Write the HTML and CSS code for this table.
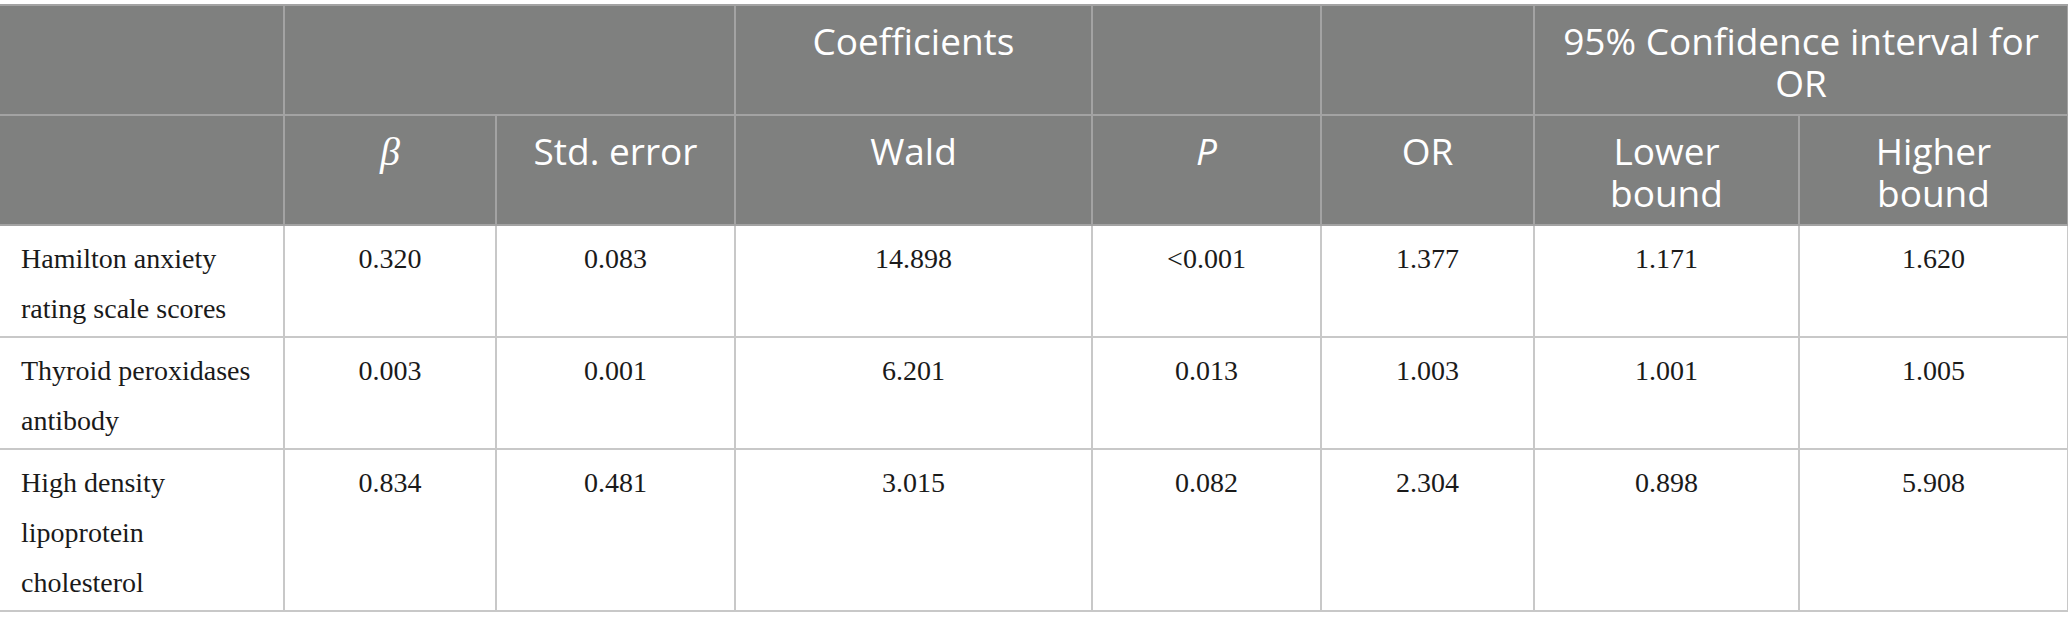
FILE: index.html
```html
<!DOCTYPE html>
<html lang="en">
<head>
<meta charset="utf-8">
<title>Logistic regression table</title>
<link rel="stylesheet" href="styles.css">
</head>
<body>
<table class="data-table">
  <colgroup>
    <col class="c0"><col class="c1"><col class="c2"><col class="c3"><col class="c4"><col class="c5"><col class="c6"><col class="c7">
  </colgroup>
  <thead>
    <tr>
      <th></th>
      <th colspan="2"></th>
      <th>Coefficients</th>
      <th></th>
      <th></th>
      <th colspan="2">95% Confidence interval for<br>OR</th>
    </tr>
    <tr>
      <th></th>
      <th><span class="beta">β</span></th>
      <th>Std. error</th>
      <th>Wald</th>
      <th><span class="ital">P</span></th>
      <th>OR</th>
      <th>Lower<br>bound</th>
      <th>Higher<br>bound</th>
    </tr>
  </thead>
  <tbody>
    <tr>
      <td class="label">Hamilton anxiety rating scale scores</td>
      <td>0.320</td><td>0.083</td><td>14.898</td><td>&lt;0.001</td><td>1.377</td><td>1.171</td><td>1.620</td>
    </tr>
    <tr>
      <td class="label">Thyroid peroxidases antibody</td>
      <td>0.003</td><td>0.001</td><td>6.201</td><td>0.013</td><td>1.003</td><td>1.001</td><td>1.005</td>
    </tr>
    <tr>
      <td class="label">High density lipoprotein cholesterol</td>
      <td>0.834</td><td>0.481</td><td>3.015</td><td>0.082</td><td>2.304</td><td>0.898</td><td>5.908</td>
    </tr>
  </tbody>
</table>
</body>
</html>
```

FILE: styles.css
```css
html, body {
  margin: 0;
  padding: 0;
  background: #ffffff;
}

body {
  padding-top: 4px;
}

.data-table {
  width: 2068px;
  table-layout: fixed;
  border-collapse: collapse;
  border: 2px solid #c4c4c4;
  border-left: none;
}

.c0 { width: 284px; }
.c1 { width: 212px; }
.c2 { width: 239px; }
.c3 { width: 357px; }
.c4 { width: 229px; }
.c5 { width: 213px; }
.c6 { width: 265px; }
.c7 { width: 269px; }

.data-table th {
  background: #7f807f;
  color: #ffffff;
  font-family: "Open Sans", "Noto Sans", sans-serif;
  font-weight: 400;
  font-size: 37px;
  line-height: 42px;
  text-align: center;
  vertical-align: top;
  padding: 14px 8px 10px;
  border: 2px solid #a3a3a3;
}

.data-table th:first-child {
  border-left: none;
}

.beta {
  font-family: "Liberation Serif", "DejaVu Serif", serif;
  font-style: italic;
  font-size: 40px;
}

.ital {
  font-style: italic;
}

.data-table td {
  font-family: "Liberation Serif", "Times New Roman", serif;
  font-size: 28px;
  line-height: 50px;
  color: #1a1a1a;
  text-align: center;
  vertical-align: top;
  padding: 8px 12px 2px;
  border: 2px solid #c8c8c8;
}

.data-table td.label {
  text-align: left;
  padding-left: 21px;
  padding-right: 20px;
  border-left: none;
}
```
